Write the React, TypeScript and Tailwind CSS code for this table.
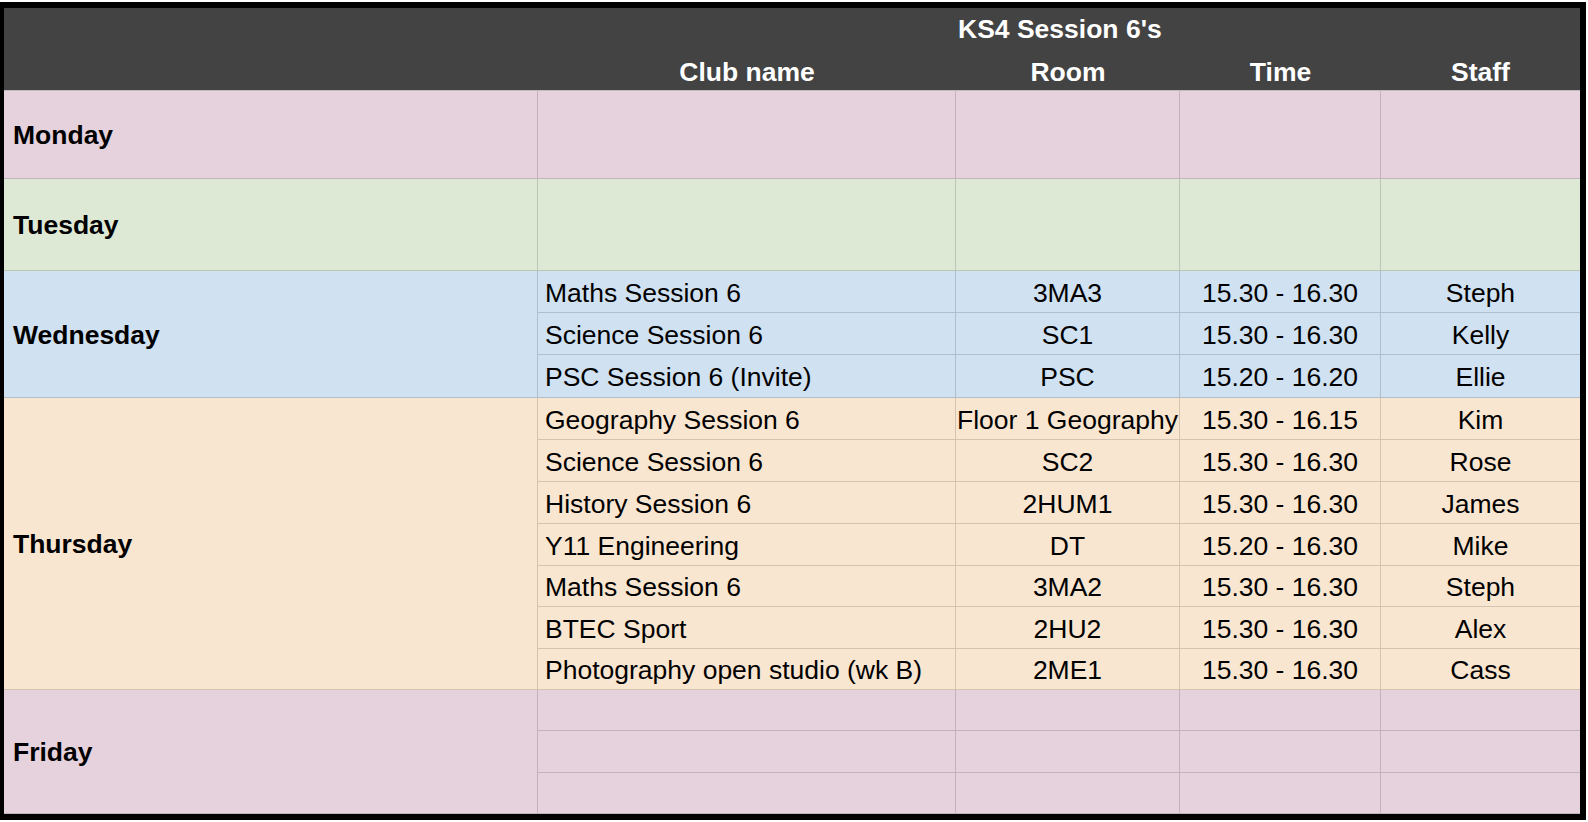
import React from 'react';

type Row = { club: string; room: string; time: string; staff: string; h: string };

type Day = { name: string; bg: string; rows: Row[] };

const empty = (h: string): Row => ({ club: '', room: '', time: '', staff: '', h });

const DAYS: Day[] = [
    { name: 'Monday', bg: 'bg-[#e6d2dc]', rows: [empty('h-[88px]')] },
    { name: 'Tuesday', bg: 'bg-[#dde9d5]', rows: [empty('h-[92px]')] },
    {
        name: 'Wednesday',
        bg: 'bg-[#d0e1f1]',
        rows: [
            { club: 'Maths Session 6', room: '3MA3', time: '15.30 - 16.30', staff: 'Steph', h: 'h-[42px]' },
            { club: 'Science Session 6', room: 'SC1', time: '15.30 - 16.30', staff: 'Kelly', h: 'h-[42px]' },
            { club: 'PSC Session 6 (Invite)', room: 'PSC', time: '15.20 - 16.20', staff: 'Ellie', h: 'h-[43px]' },
        ],
    },
    {
        name: 'Thursday',
        bg: 'bg-[#f9e6d1]',
        rows: [
            { club: 'Geography Session 6', room: 'Floor 1 Geography', time: '15.30 - 16.15', staff: 'Kim', h: 'h-[42px]' },
            { club: 'Science Session 6', room: 'SC2', time: '15.30 - 16.30', staff: 'Rose', h: 'h-[42px]' },
            { club: 'History Session 6', room: '2HUM1', time: '15.30 - 16.30', staff: 'James', h: 'h-[42px]' },
            { club: 'Y11 Engineering', room: 'DT', time: '15.20 - 16.30', staff: 'Mike', h: 'h-[42px]' },
            { club: 'Maths Session 6', room: '3MA2', time: '15.30 - 16.30', staff: 'Steph', h: 'h-[41px]' },
            { club: 'BTEC Sport', room: '2HU2', time: '15.30 - 16.30', staff: 'Alex', h: 'h-[42px]' },
            { club: 'Photography open studio (wk B)', room: '2ME1', time: '15.30 - 16.30', staff: 'Cass', h: 'h-[41px]' },
        ],
    },
    { name: 'Friday', bg: 'bg-[#e6d2dc]', rows: [empty('h-[41px]'), empty('h-[42px]'), empty('h-[41px]')] },
];

const line = 'border-[rgba(0,0,0,0.15)]';

const DaySection: React.FC<{ day: Day }> = ({ day }) => (
    <div className={`flex ${day.bg}`}>
        <div className={`w-[534px] shrink-0 flex items-center pl-[9px] pt-[1px] font-bold border-r border-b ${line}`}>
            {day.name}
        </div>
        <div className="flex flex-col">
            {day.rows.map((r, i) => (
                <div key={i} className={`flex ${r.h}`}>
                    <div className={`w-[418px] flex items-center pl-[7px] pt-[2px] whitespace-nowrap border-r border-b ${line}`}>{r.club}</div>
                    <div className={`w-[224px] flex items-center justify-center pt-[2px] whitespace-nowrap border-r border-b ${line}`}>{r.room}</div>
                    <div className={`w-[201px] flex items-center justify-center pt-[2px] whitespace-nowrap border-r border-b ${line}`}>{r.time}</div>
                    <div className={`w-[199px] flex items-center justify-center pt-[2px] whitespace-nowrap border-b ${line}`}>{r.staff}</div>
                </div>
            ))}
        </div>
    </div>
);

export default function App() {
    return (
        <div className="w-[1588px] h-[822px] bg-white pt-[2px] overflow-hidden text-black text-[26.5px] leading-[30px] font-['Liberation_Sans',Arial,sans-serif]">
            <div className="w-[1586px] border-l-4 border-t-[6px] border-r-[6px] border-b-[6px] border-black">
                {/* header */}
                <div className="bg-[#434343] text-white font-bold border-b border-[#bdbdbd]">
                    <div className="flex h-[41px]">
                        <div className="w-[952px] shrink-0" />
                        <div className="flex items-center pl-[2px] whitespace-nowrap">KS4 Session 6's</div>
                    </div>
                    <div className="flex h-[41px] pt-[4px]">
                        <div className="w-[534px] shrink-0" />
                        <div className="w-[418px] flex items-center justify-center">Club name</div>
                        <div className="w-[224px] flex items-center justify-center">Room</div>
                        <div className="w-[201px] flex items-center justify-center">Time</div>
                        <div className="w-[199px] flex items-center justify-center">Staff</div>
                    </div>
                </div>
                {DAYS.map(d => <DaySection key={d.name} day={d} />)}
            </div>
        </div>
    );
}
